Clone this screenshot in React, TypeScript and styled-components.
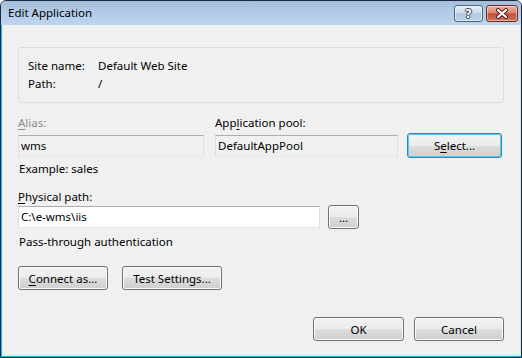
import styled, { createGlobalStyle } from 'styled-components'

const GlobalStyle = createGlobalStyle`
  html, body {
    margin: 0;
    padding: 0;
    background: #ffffff;
  }
  body {
    font-family: "Noto Sans", "Open Sans", sans-serif;
    font-size: 11.5px;
    color: #000;
  }
`

const Window = styled.div`
  width: 522px;
  height: 358px;
  box-sizing: border-box;
  border: 1px solid #1c2a3b;
  border-radius: 6px 6px 0 0;
  background: #bcd4ec;
  display: flex;
  flex-direction: column;
  overflow: hidden;
`

const TitleBar = styled.div`
  height: 24px;
  flex: none;
  display: flex;
  align-items: flex-start;
  padding: 0 3px 0 7px;
  background: linear-gradient(#a3bedb 0%, #b3cbe6 45%, #bdd4ec 100%);
`

const Title = styled.div`
  flex: 1;
  line-height: 24px;
  font-size: 11.5px;
  color: #000;
`

const CaptionButtons = styled.div`
  display: flex;
  gap: 3px;
  margin-top: 4px;
`

const CaptionButton = styled.div<{ $close?: boolean }>`
  width: ${({ $close }) => ($close ? '32px' : '29px')};
  height: 17px;
  box-sizing: border-box;
  border: 1px solid ${({ $close }) => ($close ? '#6a2a20' : '#52647c')};
  border-radius: 3px;
  display: flex;
  align-items: center;
  justify-content: center;
  background: ${({ $close }) =>
    $close
      ? 'linear-gradient(#eab0a2 0%, #d98672 45%, #c54e39 52%, #d2735c 100%)'
      : 'linear-gradient(#e2ebf5 0%, #cddcec 45%, #b2c7df 52%, #c0d3e8 100%)'};
  box-shadow: inset 0 0 0 1px rgba(255, 255, 255, 0.45);
`

const HelpGlyph = styled.span`
  font-family: "DejaVu Sans", sans-serif;
  font-weight: bold;
  font-size: 12px;
  line-height: 1;
  color: #fff;
  text-shadow: 1px 0 #34465c, -1px 0 #34465c, 0 1px #34465c, 0 -1px #34465c;
`

const Frame = styled.div`
  flex: 1;
  display: flex;
  border: 1px solid #2fb1e6;
  border-top: none;
`

const Client = styled.div`
  flex: 1;
  display: flex;
  flex-direction: column;
  background: #f0f0f0;
  border: 1px solid #d6e6f5;
  border-top: none;
  padding: 22px 16px 0 15px;
`

const GroupBox = styled.div`
  width: 486px;
  height: 56px;
  box-sizing: border-box;
  border: 1px solid #d5dfe5;
  border-radius: 3px;
  padding: 9px 9px;
  display: grid;
  grid-template-columns: 70px 1fr;
  grid-auto-rows: 18px;
  align-items: center;
`

const Label = styled.div<{ $disabled?: boolean }>`
  line-height: 16px;
  white-space: nowrap;
  color: ${({ $disabled }) => ($disabled ? '#8d8d8d' : '#000')};
`

const Key = styled.span`
  text-decoration: underline;
  text-underline-offset: 2px;
`

const FieldGrid = styled.div`
  margin-top: 12px;
  display: grid;
  grid-template-columns: 197px 192px 95px;
  grid-template-rows: 16px 25px;
  row-gap: 2px;
  align-items: center;
`

const TextBox = styled.div<{ $width: number; $readOnly?: boolean }>`
  width: ${({ $width }) => $width}px;
  height: 22px;
  box-sizing: border-box;
  padding: 0 2px;
  line-height: 20px;
  white-space: nowrap;
  background: ${({ $readOnly }) => ($readOnly ? '#f0f0f0' : '#ffffff')};
  border: 1px solid #dbdfe6;
  border-top-color: #abadb3;
  border-bottom-color: #e3e9ef;
`

const Button = styled.div<{ $width: number; $focused?: boolean; $height?: number }>`
  width: ${({ $width }) => $width}px;
  height: ${({ $height }) => $height ?? 24}px;
  box-sizing: border-box;
  border: 1px solid ${({ $focused }) => ($focused ? '#3c7fb1' : '#707070')};
  border-radius: 3px;
  display: flex;
  align-items: center;
  justify-content: center;
  white-space: nowrap;
  background: linear-gradient(#f2f2f2 0%, #ebebeb 50%, #dddddd 51%, #cfcfcf 100%);
  box-shadow: ${({ $focused }) =>
    $focused ? 'inset 0 0 0 1px #52cdf6' : 'inset 0 0 0 1px #fbfbfb'};
`

const Note = styled.div<{ $top: number }>`
  margin-top: ${({ $top }) => $top}px;
  line-height: 16px;
  padding-left: 1px;
`

const PathRow = styled.div`
  height: 24px;
  display: flex;
  align-items: center;
  gap: 8px;
`

const ButtonRow = styled.div<{ $top: number; $end?: boolean }>`
  margin-top: ${({ $top }) => $top}px;
  display: flex;
  gap: ${({ $end }) => ($end ? '10px' : '14px')};
  justify-content: ${({ $end }) => ($end ? 'flex-end' : 'flex-start')};
`

const CloseIcon = () => (
  <svg width="14" height="11" viewBox="0 0 14 11">
    <path d="M3 2 L11 9 M11 2 L3 9" stroke="#4a1a12" strokeWidth="4" strokeLinecap="round" />
    <path d="M3 2 L11 9 M11 2 L3 9" stroke="#ffffff" strokeWidth="2.2" strokeLinecap="round" />
  </svg>
)

const App = () => (
  <>
    <GlobalStyle />
    <Window>
      <TitleBar>
        <Title>Edit Application</Title>
        <CaptionButtons>
          <CaptionButton>
            <HelpGlyph>?</HelpGlyph>
          </CaptionButton>
          <CaptionButton $close>
            <CloseIcon />
          </CaptionButton>
        </CaptionButtons>
      </TitleBar>
      <Frame>
        <Client>
          <GroupBox>
            <Label>Site name:</Label>
            <Label>Default Web Site</Label>
            <Label>Path:</Label>
            <Label>/</Label>
          </GroupBox>

          <FieldGrid>
            <Label $disabled>
              <Key>A</Key>lias:
            </Label>
            <Label>
              App<Key>l</Key>ication pool:
            </Label>
            <div />
            <TextBox $width={186} $readOnly>wms</TextBox>
            <TextBox $width={183} $readOnly>DefaultAppPool</TextBox>
            <Button $width={95} $height={25} $focused>
              S<Key>e</Key>lect...
            </Button>
          </FieldGrid>

          <Note $top={3}>Example: sales</Note>

          <Label style={{ marginTop: 12 }}>
            <Key>P</Key>hysical path:
          </Label>
          <PathRow>
            <TextBox $width={302}>C:\e-wms\iis</TextBox>
            <Button $width={31}>...</Button>
          </PathRow>

          <Note $top={5}>Pass-through authentication</Note>

          <ButtonRow $top={16}>
            <Button $width={90}>
              <Key>C</Key>onnect as...
            </Button>
            <Button $width={100}>Test Settings...</Button>
          </ButtonRow>

          <ButtonRow $top={27} $end>
            <Button $width={91}>OK</Button>
            <Button $width={90}>Cancel</Button>
          </ButtonRow>
        </Client>
      </Frame>
    </Window>
  </>
)

export default App
